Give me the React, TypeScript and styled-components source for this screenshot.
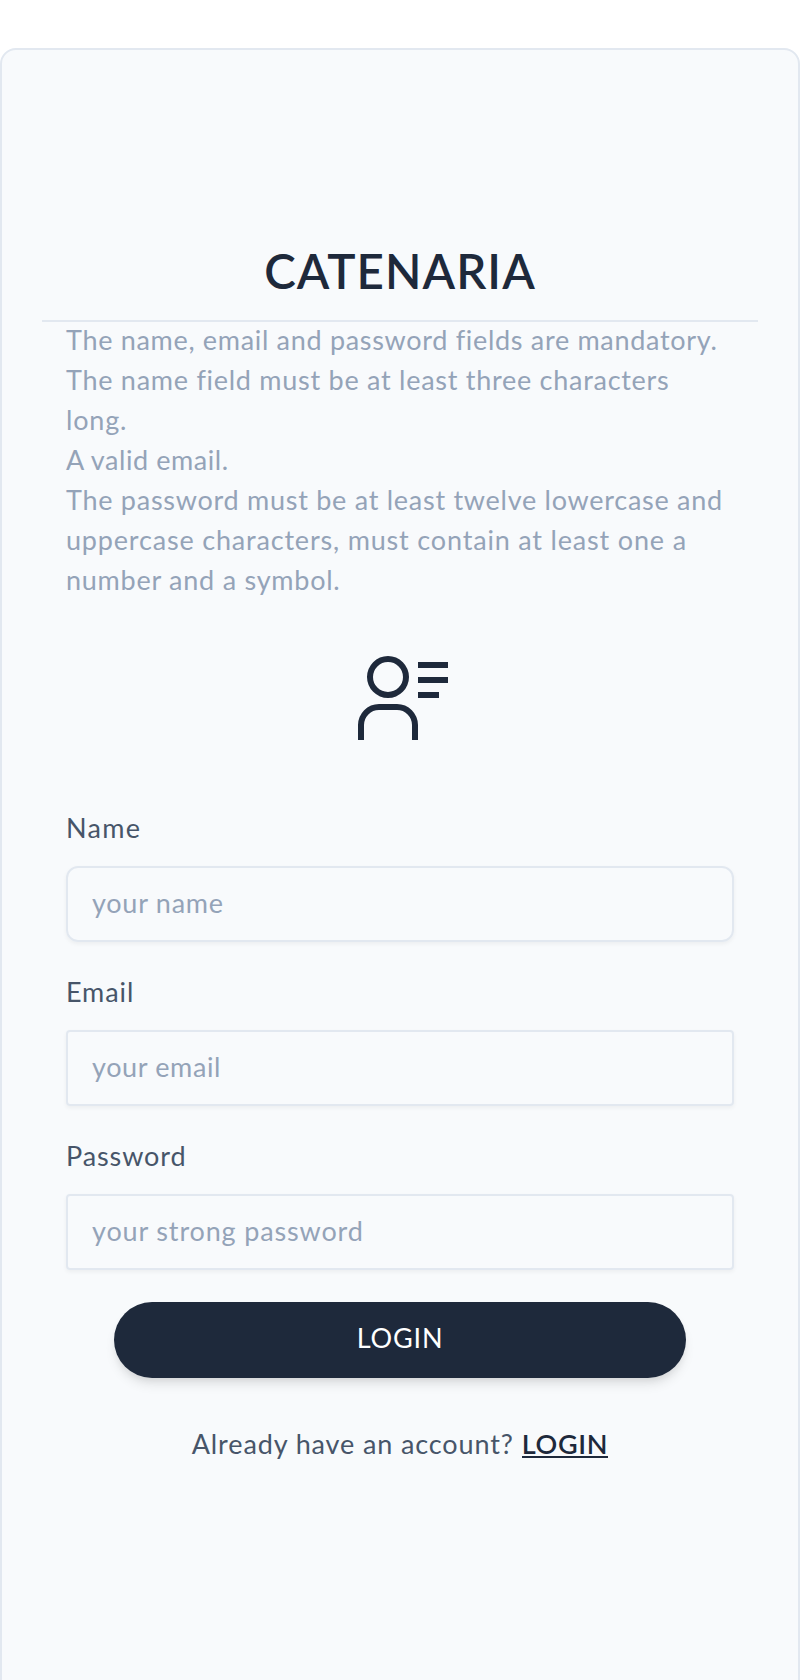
import React from "react";
import styled, { createGlobalStyle } from "styled-components";

const Global = createGlobalStyle`
  *, *::before, *::after { box-sizing: border-box; }
  html, body { margin: 0; background: #fff; }
  body { font-family: Lato, "Open Sans", sans-serif; font-size: 27px; line-height: 40px; color: #475569; }
`;

const Page = styled.main`
  height: 1680px;
  padding-top: 48px;
  overflow: hidden;
`;

const Card = styled.section`
  display: flex;
  flex-direction: column;
  height: 1700px;
  padding: 189px 40px 0;
  border: 2px solid #e2e8f0;
  border-radius: 16px;
  background: #f8fafc;
`;

const Title = styled.h1`
  margin: 0;
  height: 83px;
  border-bottom: 2px solid #e2e8f0;
  color: #1e293b;
  font-size: 47.5px;
  font-weight: 600;
  letter-spacing: 1.07px;
  line-height: 64px;
  text-align: center;
`;

const Rules = styled.div`
  margin: -2px 24px 0;
  color: #94a3b8;
`;

const Line = styled.div<{ $track: number }>`
  letter-spacing: ${({ $track }) => $track}px;
  white-space: nowrap;
`;

const Tracked = styled.span<{ $track: number }>`
  letter-spacing: ${({ $track }) => $track}px;
`;

const ProfileIcon = styled.svg`
  display: block;
  width: 96px;
  height: 96px;
  margin: 50px auto 0;
  fill: #1e293b;
`;

const Form = styled.form`
  display: flex;
  flex-direction: column;
  gap: 30px;
  margin: 62px 24px 0;
`;

const Field = styled.label`
  display: flex;
  flex-direction: column;
  gap: 18px;
`;

const Input = styled.input<{ $radius: number; $track: number }>`
  width: 100%;
  height: 76px;
  padding: 0 24px 4px;
  border: 2px solid #e2e8f0;
  border-radius: ${({ $radius }) => $radius}px;
  outline: none;
  background: transparent;
  box-shadow: 0 2px 4px rgba(0, 0, 0, 0.05);
  color: #475569;
  font: inherit;
  letter-spacing: ${({ $track }) => $track}px;
  &::placeholder { color: #94a3b8; opacity: 1; }
`;

const Submit = styled.button`
  height: 76px;
  margin: 2px 48px 0;
  padding: 0 0 4px;
  border: 0;
  border-radius: 38px;
  background: #1e293b;
  box-shadow: 0 8px 12px -2px rgba(0, 0, 0, 0.1), 0 4px 8px -4px rgba(0, 0, 0, 0.1);
  color: #fff;
  font: inherit;
  letter-spacing: 0.85px;
`;

const Footer = styled.p`
  display: flex;
  justify-content: center;
  gap: 8px;
  margin: 46px 0 0;
  white-space: nowrap;
`;

const FooterLink = styled.a`
  height: 34px;
  border-bottom: 2px solid #1e293b;
  color: #1e293b;
  font-weight: 600;
  letter-spacing: 0.68px;
  text-decoration: none;
`;

const rules = [
  { text: "The name, email and password fields are mandatory.", track: 0.69 },
  { text: "The name field must be at least three characters", track: 0.73 },
  { text: "long.", track: 0.8 },
  { text: "A valid email.", track: 0.57 },
  { text: "The password must be at least twelve lowercase and", track: 0.73 },
  { text: "uppercase characters, must contain at least one a", track: 0.82 },
  { text: "number and a symbol.", track: 0.75 },
];

const fields = [
  { label: "Name", placeholder: "your name", type: "text", radius: 12, track: 0.75, labelTrack: 1.3 },
  { label: "Email", placeholder: "your email", type: "email", radius: 4, track: 0.63, labelTrack: 0.9 },
  { label: "Password", placeholder: "your strong password", type: "password", radius: 4, track: 0.85, labelTrack: 0.9 },
];

export default function App() {
  return (
    <>
      <Global />
      <Page>
        <Card>
          <Title>CATENARIA</Title>
          <Rules>
            {rules.map((r) => (
              <Line key={r.text} $track={r.track}>{r.text}</Line>
            ))}
          </Rules>
          <ProfileIcon viewBox="0 0 32 32" aria-hidden="true">
            <path d="M12 4a5 5 0 1 1-5 5 5 5 0 0 1 5-5m0-2a7 7 0 1 0 7 7 7 7 0 0 0-7-7zM22 30h-2v-5a5 5 0 0 0-5-5H9a5 5 0 0 0-5 5v5H2v-5a7 7 0 0 1 7-7h6a7 7 0 0 1 7 7zM22 4h10v2H22zM22 9h10v2H22zM22 14h7v2h-7z" />
          </ProfileIcon>
          <Form>
            {fields.map((f) => (
              <Field key={f.label}>
                <Tracked $track={f.labelTrack}>{f.label}</Tracked>
                <Input type={f.type} placeholder={f.placeholder} $radius={f.radius} $track={f.track} />
              </Field>
            ))}
            <Submit type="button">LOGIN</Submit>
          </Form>
          <Footer>
            <Tracked $track={0.88}>Already have an account?</Tracked>
            <FooterLink href="#">LOGIN</FooterLink>
          </Footer>
        </Card>
      </Page>
    </>
  );
}
